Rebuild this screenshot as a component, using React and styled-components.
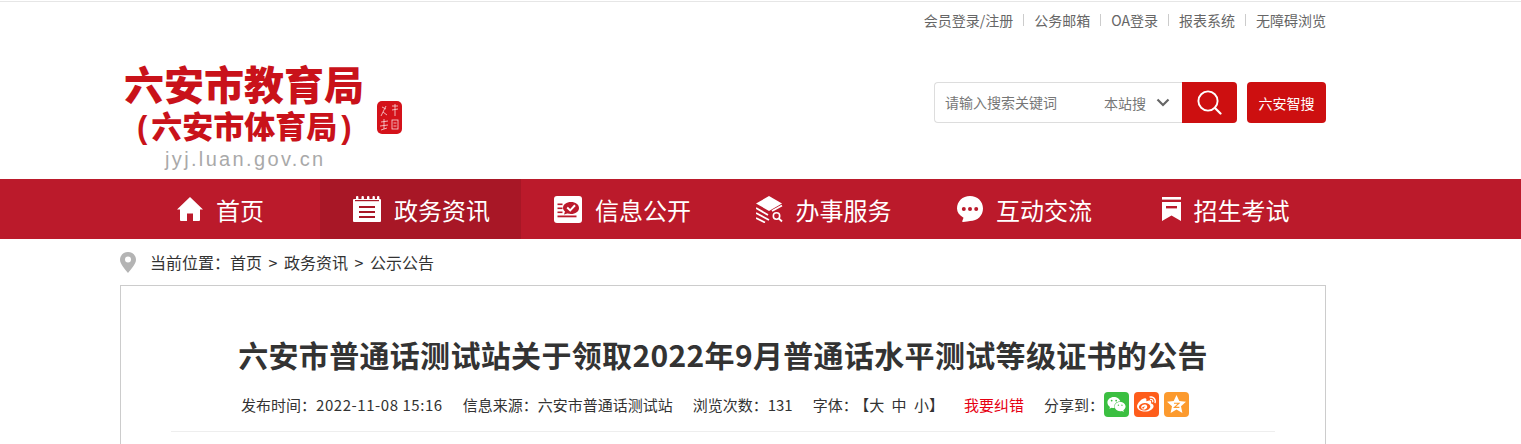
import React from "react";
import styled, { createGlobalStyle } from "styled-components";
import { FaWeixin, FaWeibo } from "react-icons/fa";

const GlobalStyle = createGlobalStyle`
  html, body {
    margin: 0;
    padding: 0;
    background: #fff;
    overflow: hidden;
    font-family: "Noto Sans CJK SC", "Liberation Sans", sans-serif;
  }
`;

const topLinks = ["会员登录/注册", "公务邮箱", "OA登录", "报表系统", "无障碍浏览"];

const HomeIcon = () => (
  <svg width="26" height="26" viewBox="0 0 26 26">
    <path d="M13 1 L26 13.5 L23 13.5 L23 24 Q23 25 22 25 L16 25 L16 17.5 L10 17.5 L10 25 L4 25 Q3 25 3 24 L3 13.5 L0 13.5 Z" fill="#fff" />
  </svg>
);

const NoteIcon = () => (
  <svg width="28" height="26" viewBox="0 0 28 26">
    <path d="M1 3 H27 Q28 3 28 4 V25 Q28 26 27 26 H1 Q0 26 0 25 V4 Q0 3 1 3 Z" fill="#fff" />
    <g fill="#fff">
      <rect x="3" y="0" width="2.4" height="5" rx="1" />
      <rect x="8.5" y="0" width="2.4" height="5" rx="1" />
      <rect x="14" y="0" width="2.4" height="5" rx="1" />
      <rect x="19.5" y="0" width="2.4" height="5" rx="1" />
      <rect x="24" y="0" width="2.4" height="5" rx="1" />
    </g>
    <g fill="#a81726">
      <rect x="2" y="4" width="24" height="1.2" />
      <rect x="6" y="10" width="16" height="2" />
      <rect x="6" y="15" width="16" height="2" />
      <rect x="6" y="20" width="16" height="2" />
    </g>
  </svg>
);

const InfoIcon = () => (
  <svg width="28" height="27" viewBox="0 0 28 27">
    <rect width="28" height="27" rx="3" fill="#fff" />
    <g fill="#bb1a2b">
      <rect x="3.5" y="7.5" width="5" height="1.6" />
      <rect x="3.5" y="11.5" width="5" height="1.6" />
      <rect x="3.5" y="15.5" width="5" height="1.6" />
      <rect x="3.5" y="19.5" width="19" height="1.8" />
      <path d="M17 6 C21.5 6 25 8.4 25 12 C25 15.6 21.5 18 17 18 C15.8 18 14.5 17.8 13.4 17.5 L10 18.4 L11 15.4 C9.8 14.4 9 13.3 9 12 C9 8.4 12.5 6 17 6 Z" />
    </g>
    <path d="M13.2 11.6 L16.2 14.4 L21 9.2" fill="none" stroke="#fff" strokeWidth="2" />
  </svg>
);

const LayersIcon = () => (
  <svg width="27" height="27" viewBox="0 0 27 27">
    <path d="M13 0 L26 7.5 L13 15 L0 7.5 Z" fill="#fff" />
    <path d="M0 12 L12 19 M0 17 L13 24 M0 22 L9 26.5" fill="none" stroke="#fff" strokeWidth="1.8" />
    <path d="M16 15 L26 9.5" fill="none" stroke="#fff" strokeWidth="1.8" />
    <circle cx="20.5" cy="20" r="3.2" fill="none" stroke="#fff" strokeWidth="1.6" />
    <path d="M22.8 22.3 L26 25.5" stroke="#fff" strokeWidth="1.8" />
  </svg>
);

const ChatIcon = () => (
  <svg width="26" height="26" viewBox="0 0 26 26">
    <path d="M13 0 C20.5 0 26 5.4 26 12.6 C26 19.8 20.5 25 13 25 C11.5 25 9 26 6 26 C5 26 5 25.4 5.5 24.6 L6.5 21.8 C2.5 19.5 0 16.4 0 12.6 C0 5.4 5.5 0 13 0 Z" fill="#fff" />
    <g fill="#bb1a2b">
      <circle cx="6.8" cy="13" r="2" />
      <circle cx="13" cy="13" r="2" />
      <circle cx="19.2" cy="13" r="2" />
    </g>
  </svg>
);

const BookmarkIcon = () => (
  <svg width="19" height="24" viewBox="0 0 19 24">
    <rect width="19" height="2.6" fill="#fff" />
    <path d="M0 5 H19 V24 L9.5 18.6 L0 24 Z" fill="#fff" />
    <rect x="4" y="9" width="11" height="2.4" fill="#bb1a2b" />
  </svg>
);

const navItems = [
  { label: "首页", icon: <HomeIcon /> },
  { label: "政务资讯", icon: <NoteIcon />, active: true },
  { label: "信息公开", icon: <InfoIcon /> },
  { label: "办事服务", icon: <LayersIcon /> },
  { label: "互动交流", icon: <ChatIcon /> },
  { label: "招生考试", icon: <BookmarkIcon /> },
];

function App() {
  return (
    <Page>
      <GlobalStyle />
      <Container>
        <TopLinks>
          {topLinks.map((link) => (
            <TopLink key={link}>{link}</TopLink>
          ))}
        </TopLinks>
        <Header>
          <Logo>
            <LogoMain>六安市教育局</LogoMain>
            <LogoSub>
              <Paren>(</Paren>六安市体育局<Paren>)</Paren>
            </LogoSub>
            <LogoUrl>jyj.luan.gov.cn</LogoUrl>
            <Seal viewBox="0 0 25 33">
              <rect width="25" height="33" rx="5" fill="#d4121a" />
              <g fill="none" stroke="#fff" strokeWidth="0.8" opacity="0.85">
                <path d="M15 5 H21 M18 3 V15 M15 9 L21 8" />
                <path d="M5 6 L9 8 M9 5 L4 15 M6 11 L10 14" />
                <path d="M4 21 L11 20 M7 18 V28 M3 25 L11 24 M4 29 L10 27" />
                <rect x="15" y="19" width="6" height="9" />
                <path d="M16.5 22 H19.5 M16.5 25 H19.5" />
              </g>
            </Seal>
          </Logo>
          <SearchArea>
            <SearchBox>
              <SearchInput placeholder="请输入搜索关键词" />
              <ScopeSelect>
                本站搜
                <svg width="14" height="9" viewBox="0 0 14 9">
                  <path d="M1.5 1.5 L7 7 L12.5 1.5" fill="none" stroke="#666" strokeWidth="2.2" />
                </svg>
              </ScopeSelect>
              <SearchButton aria-label="搜索">
                <svg width="25" height="25" viewBox="0 0 25 25">
                  <circle cx="11" cy="11" r="9.6" fill="none" stroke="#fff" strokeWidth="1.9" />
                  <path d="M18 18 L23.5 23.5" stroke="#fff" strokeWidth="2.2" strokeLinecap="round" />
                </svg>
              </SearchButton>
            </SearchBox>
            <SmartSearch>六安智搜</SmartSearch>
          </SearchArea>
        </Header>
      </Container>
      <NavBar>
        <NavList>
          {navItems.map((item) => (
            <NavItem key={item.label} $active={item.active}>
              {item.icon}
              <span>{item.label}</span>
            </NavItem>
          ))}
        </NavList>
      </NavBar>
      <Container>
        <Breadcrumb>
          <svg width="16" height="21" viewBox="0 0 16 21">
            <path d="M8 0 C12.5 0 16 3.4 16 7.8 C16 12 11 17.5 8 21 C5 17.5 0 12 0 7.8 C0 3.4 3.5 0 8 0 Z" fill="#b4b4b4" />
            <circle cx="8" cy="7.6" r="3" fill="#fff" />
          </svg>
          <Crumbs>
            当前位置：首页<CrumbSep>&gt;</CrumbSep>政务资讯<CrumbSep>&gt;</CrumbSep>公示公告
          </Crumbs>
        </Breadcrumb>
        <Card>
          <Title>六安市普通话测试站关于领取2022年9月普通话水平测试等级证书的公告</Title>
          <Meta>
            <span>
              发布时间：<DateText>2022-11-08 15:16</DateText>
            </span>
            <span>信息来源：六安市普通话测试站</span>
            <span>浏览次数：131</span>
            <span>
              字体：<FontSizes>【大 中 小】</FontSizes>
            </span>
            <Correction>我要纠错</Correction>
            <Share>
              分享到：
              <ShareButton $color="#3bbf41">
                <FaWeixin size={19} />
              </ShareButton>
              <ShareButton $color="#fe5d1b">
                <FaWeibo size={19} />
              </ShareButton>
              <ShareButton $color="#fc9a2e">
                <svg width="19" height="18" viewBox="0 0 19 18">
                  <path d="M9.5 0 L12.3 6 L19 6.8 L14 11.2 L15.4 18 L9.5 14.6 L3.6 18 L5 11.2 L0 6.8 L6.7 6 Z" fill="#fff" />
                  <path d="M7 8.2 H12 L7.4 12.4 H12.4" fill="none" stroke="#fc9a2e" strokeWidth="1.1" />
                </svg>
              </ShareButton>
            </Share>
          </Meta>
        </Card>
      </Container>
    </Page>
  );
}

export default App;

const Page = styled.div`
  border-top: 1px solid #e6e6e6;
  margin-top: 1px;
  color: #333;
`;

const Container = styled.div`
  width: 1206px;
  margin-left: 120px;
`;

const TopLinks = styled.div`
  display: flex;
  justify-content: flex-end;
  align-items: center;
  height: 36px;
`;

const TopLink = styled.a`
  font-size: 14px;
  line-height: 12px;
  color: #666;
  padding: 0 10px;
  border-left: 1px solid #ccc;

  &:first-child {
    border-left: none;
  }
  &:last-child {
    padding-right: 0;
  }
`;

const Header = styled.div`
  display: flex;
  justify-content: space-between;
  height: 141px;
`;

const Logo = styled.div`
  position: relative;
  width: 290px;
  padding: 24px 0 0 4px;
  display: flex;
  flex-direction: column;
  color: #c9121a;
`;

const LogoMain = styled.div`
  font-size: 40px;
  font-weight: 900;
  line-height: 42px;
  white-space: nowrap;
`;

const LogoSub = styled.div`
  font-size: 31px;
  font-weight: 900;
  line-height: 32px;
  margin-top: 5px;
  padding-left: 9px;
  white-space: nowrap;
`;

const Paren = styled.span`
  font-family: "Liberation Sans", sans-serif;
  font-weight: 700;
  margin: 0 4px;
`;

const LogoUrl = styled.div`
  font-family: "Liberation Sans", sans-serif;
  font-size: 20px;
  line-height: 22px;
  letter-spacing: 2.35px;
  color: #a9a9a9;
  margin-top: 4px;
  padding-left: 41px;
`;

const Seal = styled.svg`
  position: absolute;
  left: 257px;
  top: 63px;
  width: 25px;
  height: 33px;
`;

const SearchArea = styled.div`
  display: flex;
  gap: 10px;
  padding-top: 44px;
  height: 41px;
`;

const SearchBox = styled.div`
  display: flex;
  align-items: center;
  width: 303px;
  height: 41px;
  box-sizing: border-box;
  border: 1px solid #ddd;
  border-right: none;
  border-radius: 4px;
  background: #fff;
`;

const SearchInput = styled.input`
  width: 169px;
  height: 100%;
  box-sizing: border-box;
  padding: 0 0 2px 10px;
  border: none;
  outline: none;
  background: transparent;
  font-family: "Noto Sans CJK SC", sans-serif;
  font-size: 14px;

  &::placeholder {
    color: #777;
    opacity: 1;
  }
`;

const ScopeSelect = styled.div`
  display: flex;
  align-items: center;
  gap: 10px;
  width: 78px;
  font-size: 14px;
  color: #777;
`;

const SearchButton = styled.button`
  display: flex;
  align-items: center;
  justify-content: center;
  width: 55px;
  height: 41px;
  padding: 0;
  border: none;
  background: #cd0f10;
  border-radius: 0 4px 4px 0;
`;

const SmartSearch = styled.button`
  width: 79px;
  height: 41px;
  padding: 0;
  border: none;
  border-radius: 4px;
  background: #cd0f10;
  color: #fff;
  font-family: "Noto Sans CJK SC", sans-serif;
  font-size: 14px;
`;

const NavBar = styled.nav`
  background: #bb1a2b;
  height: 60px;
`;

const NavList = styled.div`
  display: grid;
  grid-template-columns: repeat(6, 201px);
  width: 1206px;
  margin-left: 119px;
  height: 100%;
`;

const NavItem = styled.a`
  display: flex;
  align-items: center;
  justify-content: center;
  gap: 13px;
  padding-left: 2px;
  font-size: 24px;
  color: #fff;
  background: ${(props) => (props.$active ? "#a81726" : "transparent")};
`;

const Breadcrumb = styled.div`
  display: flex;
  align-items: center;
  gap: 14px;
  height: 46px;
  color: #333;
`;

const Crumbs = styled.div`
  font-size: 16px;
  line-height: 46px;
`;

const CrumbSep = styled.span`
  display: inline-block;
  width: 22px;
  text-align: center;
  font-size: 16px;
`;

const Card = styled.div`
  border: 1px solid #ccc;
  box-sizing: border-box;
  min-height: 400px;
  padding: 0 50px;
  background: #fff;
`;

const Title = styled.h1`
  margin: 0;
  padding-top: 45px;
  font-size: 30px;
  line-height: 46px;
  font-weight: 700;
  letter-spacing: 0.33px;
  color: #333;
  text-align: center;
  white-space: nowrap;
`;

const Meta = styled.div`
  display: flex;
  justify-content: center;
  align-items: center;
  gap: 20px;
  height: 54px;
  padding-right: 16px;
  border-bottom: 1px solid #eee;
  font-size: 15px;
  color: #333;
  white-space: nowrap;
`;

const DateText = styled.span`
  letter-spacing: 0.55px;
`;

const FontSizes = styled.span`
  margin-left: 4px;
  word-spacing: 4px;
`;

const Correction = styled.a`
  color: #e60012;
`;

const Share = styled.div`
  display: flex;
  align-items: center;
`;

const ShareButton = styled.a`
  display: flex;
  align-items: center;
  justify-content: center;
  width: 25px;
  height: 25px;
  margin-left: 5px;
  border-radius: 4px;
  color: #fff;
  background: ${(props) => props.$color};

  &:first-of-type {
    margin-left: 0;
  }
`;
